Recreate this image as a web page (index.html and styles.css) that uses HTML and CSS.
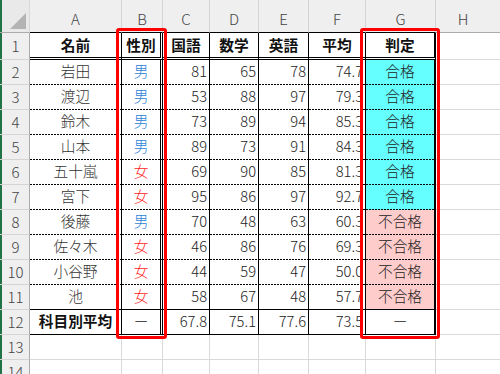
FILE: index.html
```html
<!DOCTYPE html>
<html lang="ja">
<head>
<meta charset="utf-8">
<title>成績表</title>
<link rel="stylesheet" href="styles.css">
</head>
<body>
<div class="sheet">
  <div class="grid">
    <div class="c corner"><svg class="tri" width="18" height="18" viewBox="0 0 18 18"><polygon points="17,1 17,17 1,17" fill="#b4b4b4"/></svg></div>
    <div class="c hd tb">A</div>
    <div class="c hd tb">B</div>
    <div class="c hd tb">C</div>
    <div class="c hd tb">D</div>
    <div class="c hd tb">E</div>
    <div class="c hd tb">F</div>
    <div class="c hd tb">G</div>
    <div class="c hd x hh">H</div>

    <div class="c rh">1</div>
    <div class="c t r1 ctr bold">名前</div>
    <div class="c t b r1 ctr bold">性別</div>
    <div class="c t r1 ctr bold">国語</div>
    <div class="c t r1 ctr bold">数学</div>
    <div class="c t r1 ctr bold">英語</div>
    <div class="c t r1 ctr bold">平均</div>
    <div class="c t g r1 ctr bold">判定</div>
    <div class="c x"></div>

    <div class="c rh">2</div>
    <div class="c t dot ctr name">岩田</div>
    <div class="c t b dot ctr male">男</div>
    <div class="c t dot num">81</div>
    <div class="c t dot num">65</div>
    <div class="c t dot num">78</div>
    <div class="c t dot num">74.7</div>
    <div class="c t g dot ctr pass">合格</div>
    <div class="c x"></div>

    <div class="c rh">3</div>
    <div class="c t dot ctr name">渡辺</div>
    <div class="c t b dot ctr male">男</div>
    <div class="c t dot num">53</div>
    <div class="c t dot num">88</div>
    <div class="c t dot num">97</div>
    <div class="c t dot num">79.3</div>
    <div class="c t g dot ctr pass">合格</div>
    <div class="c x"></div>

    <div class="c rh">4</div>
    <div class="c t dot ctr name">鈴木</div>
    <div class="c t b dot ctr male">男</div>
    <div class="c t dot num">73</div>
    <div class="c t dot num">89</div>
    <div class="c t dot num">94</div>
    <div class="c t dot num">85.3</div>
    <div class="c t g dot ctr pass">合格</div>
    <div class="c x"></div>

    <div class="c rh">5</div>
    <div class="c t dot ctr name">山本</div>
    <div class="c t b dot ctr male">男</div>
    <div class="c t dot num">89</div>
    <div class="c t dot num">73</div>
    <div class="c t dot num">91</div>
    <div class="c t dot num">84.3</div>
    <div class="c t g dot ctr pass">合格</div>
    <div class="c x"></div>

    <div class="c rh">6</div>
    <div class="c t dot ctr name">五十嵐</div>
    <div class="c t b dot ctr female">女</div>
    <div class="c t dot num">69</div>
    <div class="c t dot num">90</div>
    <div class="c t dot num">85</div>
    <div class="c t dot num">81.3</div>
    <div class="c t g dot ctr pass">合格</div>
    <div class="c x"></div>

    <div class="c rh">7</div>
    <div class="c t dot ctr name">宮下</div>
    <div class="c t b dot ctr female">女</div>
    <div class="c t dot num">95</div>
    <div class="c t dot num">86</div>
    <div class="c t dot num">97</div>
    <div class="c t dot num">92.7</div>
    <div class="c t g dot ctr pass">合格</div>
    <div class="c x"></div>

    <div class="c rh">8</div>
    <div class="c t dot ctr name">後藤</div>
    <div class="c t b dot ctr male">男</div>
    <div class="c t dot num">70</div>
    <div class="c t dot num">48</div>
    <div class="c t dot num">63</div>
    <div class="c t dot num">60.3</div>
    <div class="c t g dot ctr fail">不合格</div>
    <div class="c x"></div>

    <div class="c rh">9</div>
    <div class="c t dot ctr name">佐々木</div>
    <div class="c t b dot ctr female">女</div>
    <div class="c t dot num">46</div>
    <div class="c t dot num">86</div>
    <div class="c t dot num">76</div>
    <div class="c t dot num">69.3</div>
    <div class="c t g dot ctr fail">不合格</div>
    <div class="c x"></div>

    <div class="c rh">10</div>
    <div class="c t dot ctr name">小谷野</div>
    <div class="c t b dot ctr female">女</div>
    <div class="c t dot num">44</div>
    <div class="c t dot num">59</div>
    <div class="c t dot num">47</div>
    <div class="c t dot num">50.0</div>
    <div class="c t g dot ctr fail">不合格</div>
    <div class="c x"></div>

    <div class="c rh">11</div>
    <div class="c t solid ctr name">池</div>
    <div class="c t b solid ctr female">女</div>
    <div class="c t solid num">58</div>
    <div class="c t solid num">67</div>
    <div class="c t solid num">48</div>
    <div class="c t solid num">57.7</div>
    <div class="c t g solid ctr fail">不合格</div>
    <div class="c x"></div>

    <div class="c rh">12</div>
    <div class="c t solid ctr bold">科目別平均</div>
    <div class="c t b solid ctr">ー</div>
    <div class="c t solid num">67.8</div>
    <div class="c t solid num">75.1</div>
    <div class="c t solid num">77.6</div>
    <div class="c t solid num">73.5</div>
    <div class="c t g solid ctr">ー</div>
    <div class="c x"></div>

    <div class="c rh">13</div>
    <div class="c"></div><div class="c"></div><div class="c"></div><div class="c"></div>
    <div class="c"></div><div class="c"></div><div class="c"></div><div class="c x"></div>

    <div class="c rh">14</div>
    <div class="c"></div><div class="c"></div><div class="c"></div><div class="c"></div>
    <div class="c"></div><div class="c"></div><div class="c"></div><div class="c x"></div>
  </div>
  <div class="mark mark-b"></div>
  <div class="mark mark-g"></div>
</div>
</body>
</html>
```

FILE: styles.css
```css
body {
  margin: 0;
  background: #ffffff;
  font-family: "Noto Sans CJK JP", sans-serif;
}

.sheet {
  position: relative;
  width: 500px;
  height: 374px;
  overflow: hidden;
}

.grid {
  display: grid;
  grid-template-columns: 30px 92px 41px 47px 49px 50px 57px 70px 1fr;
  grid-template-rows: 33px 27px repeat(13, 25px);
}

.c {
  box-sizing: border-box;
  display: flex;
  align-items: center;
  padding: 0 2px 2px;
  font-size: 14.7px;
  font-weight: 300;
  line-height: 1;
  color: #222222;
  white-space: nowrap;
  overflow: hidden;
  border-right: 1px solid #d9d9d9;
  border-bottom: 1px solid #d9d9d9;
}

.corner {
  position: relative;
  background: #e9e9e9;
  border-bottom-color: #ababab;
  box-shadow: inset 2px 0 0 #217346;
  padding: 0;
}

.tri {
  position: absolute;
  right: 2px;
  bottom: 2px;
}

.hd {
  justify-content: center;
  align-items: flex-end;
  padding: 0 0 6px;
  background: #efefef;
  color: #444444;
  font-size: 15px;
  border-right-color: #d4d4d4;
  border-bottom-color: #ababab;
}

.hd.tb {
  border-bottom-color: #000000;
}

.hh {
  padding-right: 10px;
}

.rh {
  justify-content: center;
  padding: 0 0 1px 2px;
  background: #efefef;
  color: #444444;
  font-size: 15px;
  border-right-color: #ababab;
  border-bottom-color: #d4d4d4;
  box-shadow: inset 2px 0 0 #217346;
}

.x {
  border-right: none;
}

.t {
  border-right: 1px solid #000000;
}

.t.b {
  border-right: 3px double #000000;
}

.t.g {
  border-right: 2px solid #000000;
}

.r1 {
  border-bottom: 3px double #000000;
  padding-bottom: 0;
}

.dot {
  border-bottom: none;
  background-image: linear-gradient(90deg, #000000 2px, transparent 2px);
  background-size: 3px 1px;
  background-repeat: repeat-x;
  background-position: left bottom;
  padding-bottom: 3px;
}

.solid {
  border-bottom: 1px solid #000000;
}

.ctr {
  justify-content: center;
}

.num {
  justify-content: flex-end;
  padding-right: 2px;
}

.bold {
  font-weight: 700;
  color: #111111;
}

.name {
  color: #333333;
}

.male {
  color: #2b7fd6;
}

.female {
  color: #ff1a1a;
}

.pass {
  background-color: #66ffff;
}

.fail {
  background-color: #ffcccc;
}

.mark {
  position: absolute;
  box-sizing: border-box;
  border: 3px solid #ff0000;
  border-radius: 3px;
}

.mark-b {
  left: 116px;
  top: 28px;
  width: 51px;
  height: 311px;
}

.mark-g {
  left: 360px;
  top: 28px;
  width: 80px;
  height: 311px;
}
```
